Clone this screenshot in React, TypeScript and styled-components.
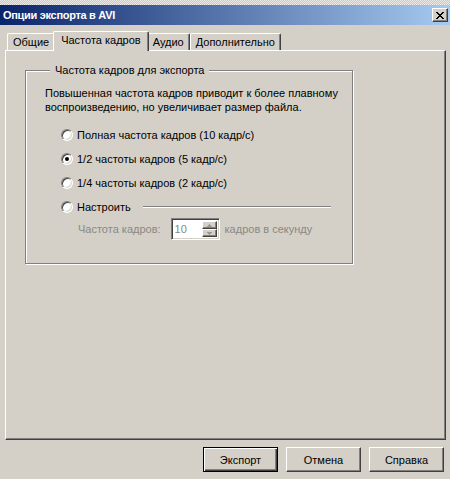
import React from 'react';
import styled, { createGlobalStyle, css } from 'styled-components';

const Global = createGlobalStyle`
  html, body { margin: 0; padding: 0; background: #d4d0c8; }
  body {
    font-family: Tahoma, "Liberation Sans", "DejaVu Sans", sans-serif;
    font-size: 11px;
    color: #000;
  }
  * { box-sizing: border-box; }
`;

const Window = styled.div`
  width: 450px;
  height: 479px;
  display: flex;
  flex-direction: column;
  background: #d4d0c8;
  overflow: hidden;
`;

const Checker = styled.div`
  height: 5px;
  background: repeating-conic-gradient(#c9c5bd 0 25%, #eeece8 0 50%) 0 0 / 2px 2px;
`;

const TitleBar = styled.div`
  height: 20px;
  display: flex;
  align-items: center;
  justify-content: space-between;
  padding: 0 2px 0 3px;
  background: linear-gradient(to right, #0a246a, #a6caf0);
`;

const Title = styled.span`
  color: #fff;
  font-weight: bold;
  font-size: 11px;
  letter-spacing: -0.3px;
`;

const CloseButton = styled.button`
  width: 16px;
  height: 14px;
  padding: 0;
  display: flex;
  align-items: center;
  justify-content: center;
  background: #d4d0c8;
  border: 1px solid;
  border-color: #fff #404040 #404040 #fff;
  box-shadow: inset -1px -1px #808080;
`;

const Body = styled.div`
  flex: 1;
  display: flex;
  flex-direction: column;
  padding: 6px 4px 0 5px;
`;

const TabStrip = styled.div`
  display: flex;
  align-items: flex-end;
  height: 19px;
  padding-left: 2px;
  position: relative;
  z-index: 1;
`;

const Tab = styled.div<{ $active?: boolean }>`
  height: 17px;
  padding: 0 5px 1px;
  display: flex;
  align-items: center;
  background: #d4d0c8;
  border-top: 1px solid #fff;
  border-left: 1px solid #fff;
  border-right: 1px solid #404040;
  border-top-left-radius: 2px;
  border-top-right-radius: 2px;
  box-shadow: inset -1px 0 #808080;
  white-space: nowrap;
  ${(p) =>
    p.$active &&
    css`
      height: 20px;
      margin: 0 -2px -1px;
      padding: 0 7px 4px;
      position: relative;
      z-index: 2;
    `}
`;

const Panel = styled.div`
  height: 390px;
  border: 1px solid;
  border-color: #fff #404040 #404040 #fff;
  box-shadow: inset -1px -1px #808080;
  padding: 12px 0 0 19px;
`;

const Group = styled.fieldset`
  width: 328px;
  margin: 0;
  padding: 9px 0 23px 19px;
  border: 1px solid #808080;
  box-shadow: inset 1px 1px #fff, 1px 1px #fff;
  min-width: 0;
`;

const Legend = styled.legend`
  margin-left: 5px;
  padding: 0 5px;
  line-height: 14px;
  background: #d4d0c8;
`;

const Description = styled.p`
  margin: 0;
  line-height: 14px;
`;

const Options = styled.div`
  display: flex;
  flex-direction: column;
  margin: 9px 0 0 16px;
`;

const OptionRow = styled.label`
  display: flex;
  align-items: center;
  height: 24px;
  gap: 4px;
`;

const RadioDot = styled.span<{ $checked?: boolean }>`
  width: 12px;
  height: 12px;
  flex: none;
  border-radius: 50%;
  border: 1px solid;
  border-color: #808080 #fff #fff #808080;
  background: #fff;
  box-shadow: inset 1px 1px #404040, inset -1px -1px #d4d0c8;
  display: flex;
  align-items: center;
  justify-content: center;
  &::after {
    content: '';
    width: 4px;
    height: 4px;
    border-radius: 50%;
    background: ${(p) => (p.$checked ? '#000' : 'transparent')};
  }
`;

const EtchedLine = styled.span`
  flex: 1;
  height: 2px;
  margin: 0 21px 0 8px;
  border-top: 1px solid #808080;
  border-bottom: 1px solid #fff;
`;

const SubRow = styled.div`
  display: flex;
  align-items: center;
  height: 22px;
  margin: -1px 0 0 33px;
  color: #8a8884;
`;

const SpinBox = styled.div`
  width: 49px;
  height: 22px;
  margin: 0 5px 0 10px;
  display: flex;
  align-items: stretch;
  background: #fff;
  border: 1px solid;
  border-color: #808080 #fff #fff #808080;
  box-shadow: inset 1px 1px #404040, inset -1px -1px #d4d0c8;
  padding: 2px;
`;

const SpinValue = styled.span`
  flex: 1;
  padding-left: 1px;
  line-height: 16px;
  color: #8a8884;
`;

const SpinButtons = styled.div`
  width: 15px;
  display: flex;
  flex-direction: column;
`;

const SpinButton = styled.div`
  flex: 1;
  background: #d4d0c8;
  border: 1px solid;
  border-color: #fff #404040 #404040 #fff;
  box-shadow: inset -1px -1px #808080;
  display: flex;
  align-items: center;
  justify-content: center;
`;

const ButtonRow = styled.div`
  display: flex;
  justify-content: flex-end;
  gap: 8px;
  padding: 7px 2px 0 0;
`;

const PushButton = styled.button<{ $default?: boolean }>`
  width: 75px;
  height: 25px;
  padding: 0;
  font-family: inherit;
  font-size: 11px;
  color: #000;
  background: #d4d0c8;
  border: 1px solid;
  border-color: #fff #404040 #404040 #fff;
  box-shadow: inset -1px -1px #808080;
  ${(p) =>
    p.$default &&
    css`
      border-color: #000;
      box-shadow: inset 1px 1px #fff, inset -1px -1px #404040, inset -2px -2px #808080;
    `}
`;

const Arrow = ({ up }: { up?: boolean }) => (
  <svg width="5" height="3" viewBox="0 0 5 3" shapeRendering="crispEdges">
    {up ? (
      <path d="M2 0h1v1h1v1h1v1H0V2h1V1h1z" fill="#9a9890" />
    ) : (
      <path d="M0 0h5v1H4v1H3v1H2V2H1V1H0z" fill="#9a9890" />
    )}
  </svg>
);

const CloseGlyph = () => (
  <svg width="8" height="7" viewBox="0 0 8 7" shapeRendering="crispEdges">
    <path
      d="M0 0h2v1h1v1h2V1h1V0h2v1H7v1H6v1H5v1h1v1h1v1h1v1H6V6H5V5H3v1H2v1H0V6h1V5h1V4h1V3H2V2H1V1H0z"
      fill="#000"
    />
  </svg>
);

const Radio = ({ checked, children }: { checked?: boolean; children: React.ReactNode }) => (
  <OptionRow>
    <RadioDot $checked={checked} />
    {children}
  </OptionRow>
);

export default function App() {
  return (
    <>
      <Global />
      <Window>
        <Checker />
        <TitleBar>
          <Title>Опции экспорта в AVI</Title>
          <CloseButton aria-label="Закрыть">
            <CloseGlyph />
          </CloseButton>
        </TitleBar>
        <Body>
          <TabStrip>
            <Tab>Общие</Tab>
            <Tab $active>Частота кадров</Tab>
            <Tab>Аудио</Tab>
            <Tab>Дополнительно</Tab>
          </TabStrip>
          <Panel>
            <Group>
              <Legend>Частота кадров для экспорта</Legend>
              <Description>
                Повышенная частота кадров приводит к более плавному
                <br />
                воспроизведению, но увеличивает размер файла.
              </Description>
              <Options>
                <Radio>Полная частота кадров (10 кадр/с)</Radio>
                <Radio checked>1/2 частоты кадров (5 кадр/с)</Radio>
                <Radio>1/4 частоты кадров (2 кадр/с)</Radio>
                <Radio>
                  Настроить
                  <EtchedLine />
                </Radio>
              </Options>
              <SubRow>
                Частота кадров:
                <SpinBox>
                  <SpinValue>10</SpinValue>
                  <SpinButtons>
                    <SpinButton>
                      <Arrow up />
                    </SpinButton>
                    <SpinButton>
                      <Arrow />
                    </SpinButton>
                  </SpinButtons>
                </SpinBox>
                кадров в секунду
              </SubRow>
            </Group>
          </Panel>
          <ButtonRow>
            <PushButton $default>Экспорт</PushButton>
            <PushButton>Отмена</PushButton>
            <PushButton>Справка</PushButton>
          </ButtonRow>
        </Body>
      </Window>
    </>
  );
}
